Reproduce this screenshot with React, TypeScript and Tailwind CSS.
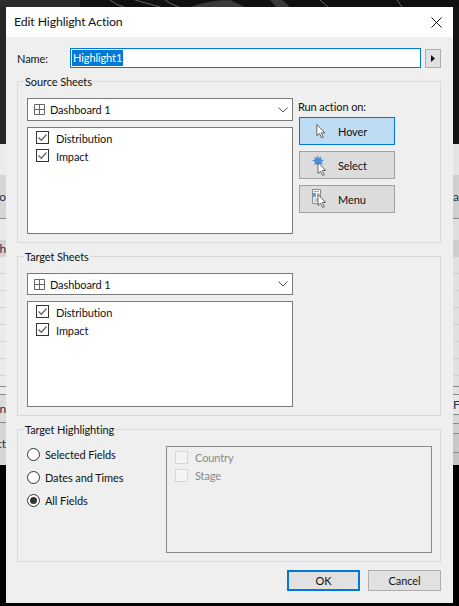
const sheets = ["Distribution", "Impact"]

// clipped rows of the table behind the dialog: [height, background, clipped text]
const leftRows: [number, string, string?][] = [
  [31, "bg-[#ececec]"],
  [43, "bg-[#d6d6d6]", "yo"],
  [22, "bg-[#e9e9e9] border-t border-[#8a8a8a]"],
  [17, "bg-[#d4d4d4]", "gh"],
  [16, "bg-[#ebebeb]"],
  [17, "bg-[#ebebeb] border-t border-[#d4d4d4]"],
  [17, "bg-[#ebebeb] border-t border-[#d4d4d4]"],
  [17, "bg-[#ebebeb] border-t border-[#d4d4d4]"],
  [17, "bg-[#ebebeb] border-t border-[#d4d4d4]"],
  [17, "bg-[#ebebeb] border-t border-[#d4d4d4]"],
  [17, "bg-[#ebebeb] border-t border-[#d4d4d4]"],
  [11, "bg-[#ebebeb] border-t border-[#d4d4d4]"],
  [8, "bg-[#ebebeb] border-t border-[#8a8a8a]"],
  [28, "bg-[#dcdcdc] border-t border-[#8a8a8a]", "n"],
  [43, "bg-[#d6d6d6] border-t border-[#8a8a8a]", "ct"],
]
const rightRows: [number, string, string?][] = [
  [31, "bg-[#e4e4e4]"],
  [43, "bg-[#cfcfcf]", "a"],
  [22, "bg-[#dedede] border-t border-[#8a8a8a]"],
  [17, "bg-[#cdcdcd]"],
  [16, "bg-[#e0e0e0]"],
  [17, "bg-[#e0e0e0] border-t border-[#cfcfcf]"],
  [17, "bg-[#e0e0e0] border-t border-[#cfcfcf]"],
  [17, "bg-[#e0e0e0] border-t border-[#cfcfcf]"],
  [17, "bg-[#e0e0e0] border-t border-[#cfcfcf]"],
  [17, "bg-[#e0e0e0] border-t border-[#cfcfcf]"],
  [17, "bg-[#e0e0e0] border-t border-[#cfcfcf]"],
  [11, "bg-[#e0e0e0] border-t border-[#cfcfcf]"],
  [8, "bg-[#e0e0e0] border-t border-[#8a8a8a]"],
  [20, "bg-[#e6e6e6] border-t border-[#8a8a8a]", "F"],
  [9, "bg-[#d8d8d8] border-t border-[#8a8a8a]"],
  [10, "bg-[#d0d0d0] border-t border-[#8a8a8a]"],
  [19, "bg-[#c8c8c8] border-t border-[#8a8a8a]"],
  [13, "bg-[#c4c4c4] border-t border-[#8a8a8a]"],
]

function Strip({ rows, top, side }: { rows: [number, string, string?][]; top: string; side: "left" | "right" }) {
  return (
    <div className="flex w-[6px] flex-col overflow-hidden">
      <div className={`h-[137px] shrink-0 ${top}`} />
      {rows.map(([h, cls, text], i) => (
        <div
          key={i}
          style={{ height: h }}
          className={`flex shrink-0 items-center overflow-hidden text-[12px] text-[#22304a] ${side === "left" ? "justify-end" : "justify-start"} ${cls}`}
        >
          {text}
        </div>
      ))}
    </div>
  )
}

function GridIcon() {
  return (
    <svg width="11" height="11" viewBox="0 0 11 11" className="shrink-0" fill="none" stroke="#666" strokeWidth="1">
      <path d="M.5.5h10v10H.5zM5.5.5v10M.5 5.5h10" />
    </svg>
  )
}

function SheetSelect({ height }: { height: string }) {
  return (
    <div className={`flex w-[266px] items-center border border-[#7a7a7a] bg-white pl-[6px] pr-[4px] ${height}`}>
      <GridIcon />
      <span className="ml-[5px] flex-1 pt-[1px]">Dashboard 1</span>
      <svg width="10" height="6" viewBox="0 0 10 6" fill="none" stroke="#555" strokeWidth="1">
        <path d="M.5.5 5 5 9.5.5" />
      </svg>
    </div>
  )
}

function CheckBox({ disabled }: { disabled?: boolean }) {
  if (disabled) return <span className="h-[13px] w-[13px] shrink-0 border border-[#d6d6d6] bg-[#f4f4f4]" />
  return (
    <span className="flex h-[13px] w-[13px] shrink-0 items-center justify-center border border-[#333] bg-white">
      <svg width="11" height="11" viewBox="0 0 11 11" fill="none" stroke="#666" strokeWidth="1.3">
        <path d="M1.5 5.5 4.3 8.3 9.5 2.5" />
      </svg>
    </span>
  )
}

function SheetList({ height }: { height: string }) {
  return (
    <div className={`mt-[6px] flex w-[266px] flex-col gap-[5px] border border-[#7a7a7a] bg-white pl-[8px] pt-[3px] ${height}`}>
      {sheets.map(s => (
        <div key={s} className="flex h-[13px] items-center gap-[7px]">
          <CheckBox />
          <span className="pt-[2px]">{s}</span>
        </div>
      ))}
    </div>
  )
}

function Group({ title, className, children }: { title: string; className: string; children: React.ReactNode }) {
  return (
    <div className={`relative w-[424px] border border-[#d9d9d9] ${className}`}>
      <span className="absolute left-[6px] top-[-8px] bg-[#efefef] px-[1px] leading-[16px]">{title}</span>
      {children}
    </div>
  )
}

const arrow = "M0 0v11l2.6-2.3 2 4.3 1.7-.8-2-4.2h3.4z"

function HoverIcon() {
  return (
    <svg width="10" height="15" viewBox="-.5 -.5 9 14.5">
      <path d={arrow} fill="#fff" stroke="#555" strokeWidth=".9" />
    </svg>
  )
}

function SelectIcon() {
  return (
    <svg width="15" height="22" viewBox="0 0 15 22">
      <path d="M5.5 0 6.8 3 9.5 1.5 9 4.5 12 5 9.5 7 11 9.5 8 9 6.5 12 5 9 2 10 3 7 0 5.5 3 4.2 2.5 1.5 5 3z" fill="#4a90e2" />
      <path d={arrow} transform="translate(6 7.5)" fill="#fff" stroke="#555" strokeWidth=".9" />
    </svg>
  )
}

function MenuIcon() {
  return (
    <svg width="15" height="20" viewBox="0 0 15 20">
      <path d="M.5.5h8v14h-8z" fill="#f4f4f4" stroke="#8a8a8a" />
      <path d="M1 4h3v4H1z" fill="#5aa5ea" />
      <path d="M2 2.5h5M5 5h3M5 7h3M2 10h5M2 12h5" stroke="#a8a8a8" />
      <path d={arrow} transform="translate(6 5.5)" fill="#fff" stroke="#555" strokeWidth=".9" />
    </svg>
  )
}

function ActionButton({ label, active, icon, iconBox }: { label: string; active?: boolean; icon: React.ReactNode; iconBox: string }) {
  return (
    <div className={`flex h-[28px] w-[96px] items-center border ${active ? "border-[#0078d7] bg-[#bfdcf5]" : "border-[#a0a0a0] bg-[#dcdcdc]"}`}>
      <span className={`flex justify-center ${iconBox}`}>{icon}</span>
      <span className="pt-[1px]">{label}</span>
    </div>
  )
}

function Radio({ label, checked }: { label: string; checked?: boolean }) {
  return (
    <div className="flex h-[13px] items-center gap-[5px]">
      <span className="flex h-[13px] w-[13px] items-center justify-center rounded-full border border-[#333] bg-white">
        {checked && <span className="h-[7px] w-[7px] rounded-full bg-[#333]" />}
      </span>
      <span>{label}</span>
    </div>
  )
}

export default function App() {
  return (
    <div className="h-[606px] w-[459px] overflow-hidden bg-black font-['Lato',sans-serif] text-[11px] leading-[16px] tracking-[-0.1px] text-[#111]">
      {/* map behind the dialog */}
      <svg width="459" height="7" className="block">
        <rect width="459" height="7" fill="#101010" />
        <rect width="80" height="7" fill="#2c2c2c" />
        <path d="M110 0q6 5 14 7M135 0l25 7M165 0q5 4 14 7M320 0l8 7M397 0l5 7" stroke="#777" strokeWidth=".8" fill="none" />
        <path d="M190 7q20-7 40-7l15 7zM270 0h12l8 7h-14z" fill="#3a3a3a" />
      </svg>
      <div className="flex">
        <Strip rows={leftRows} top="bg-[#262626]" side="left" />
        <div className="h-[596px] w-[447px] bg-[#efefef]">
          <div className="flex h-[30px] items-center justify-between bg-white pl-[8px] pr-[11px]">
            <span className="text-[12.25px]">Edit Highlight Action</span>
            <svg width="11" height="11" viewBox="0 0 11 11" stroke="#111" strokeWidth="1">
              <path d="M.5.5l10 10M10.5.5l-10 10" />
            </svg>
          </div>

          <div className="pl-[11px] pr-[12px]">
            {/* name */}
            <div className="mt-[11px] flex h-[20px] items-center">
              <span className="w-[53px] pt-[1px]">Name:</span>
              <div className="flex h-[20px] w-[351px] items-center border border-[#0078d7] bg-white pl-[1px]">
                <span className="bg-[#0078d7] px-[1px] text-white">Highlight1</span>
              </div>
              <div className="ml-[4px] flex h-[19px] w-[16px] items-center justify-center border border-[#adadad] bg-[#e1e1e1]">
                <svg width="4" height="7" viewBox="0 0 4 7"><path d="M0 0l4 3.5L0 7z" fill="#111" /></svg>
              </div>
            </div>

            <Group title="Source Sheets" className="mt-[13px] flex h-[162px] pl-[9px] pt-[16px]">
              <div>
                <SheetSelect height="h-[23px]" />
                <SheetList height="h-[107px]" />
              </div>
              <div className="ml-[5px]">
                <div className="h-[19px] pt-[1px]">Run action on:</div>
                <div className="flex flex-col gap-[6px] pl-[1px]">
                  <ActionButton label="Hover" active icon={<HoverIcon />} iconBox="w-[38px] pl-[4px]" />
                  <ActionButton label="Select" icon={<SelectIcon />} iconBox="w-[38px] pt-[2px]" />
                  <ActionButton label="Menu" icon={<MenuIcon />} iconBox="w-[38px]" />
                </div>
              </div>
            </Group>

            <Group title="Target Sheets" className="mt-[13px] h-[160px] pl-[9px] pt-[16px]">
              <SheetSelect height="h-[22px]" />
              <SheetList height="h-[106px]" />
            </Group>

            <Group title="Target Highlighting" className="mt-[13px] flex h-[133px] pl-[9px] pt-[16px]">
              <div className="flex w-[139px] flex-col gap-[10px] pt-[2px]">
                <Radio label="Selected Fields" />
                <Radio label="Dates and Times" />
                <Radio label="All Fields" checked />
              </div>
              <div className="flex h-[107px] w-[266px] flex-col gap-[5px] border border-[#8a8a8a] pl-[8px] pt-[4px] text-[#8a8a8a]">
                <div className="flex h-[13px] items-center gap-[7px]"><CheckBox disabled /><span>Country</span></div>
                <div className="flex h-[13px] items-center gap-[7px]"><CheckBox disabled /><span>Stage</span></div>
              </div>
            </Group>

            <div className="mt-[8px] flex justify-end gap-[8px]">
              <div className="flex h-[21px] w-[73px] items-center justify-center border-2 border-[#0078d7] bg-[#e1e1e1]">OK</div>
              <div className="flex h-[21px] w-[73px] items-center justify-center border border-[#adadad] bg-[#e1e1e1]">Cancel</div>
            </div>
          </div>
        </div>
        <Strip rows={rightRows} top="bg-[#141414]" side="right" />
      </div>
    </div>
  )
}
